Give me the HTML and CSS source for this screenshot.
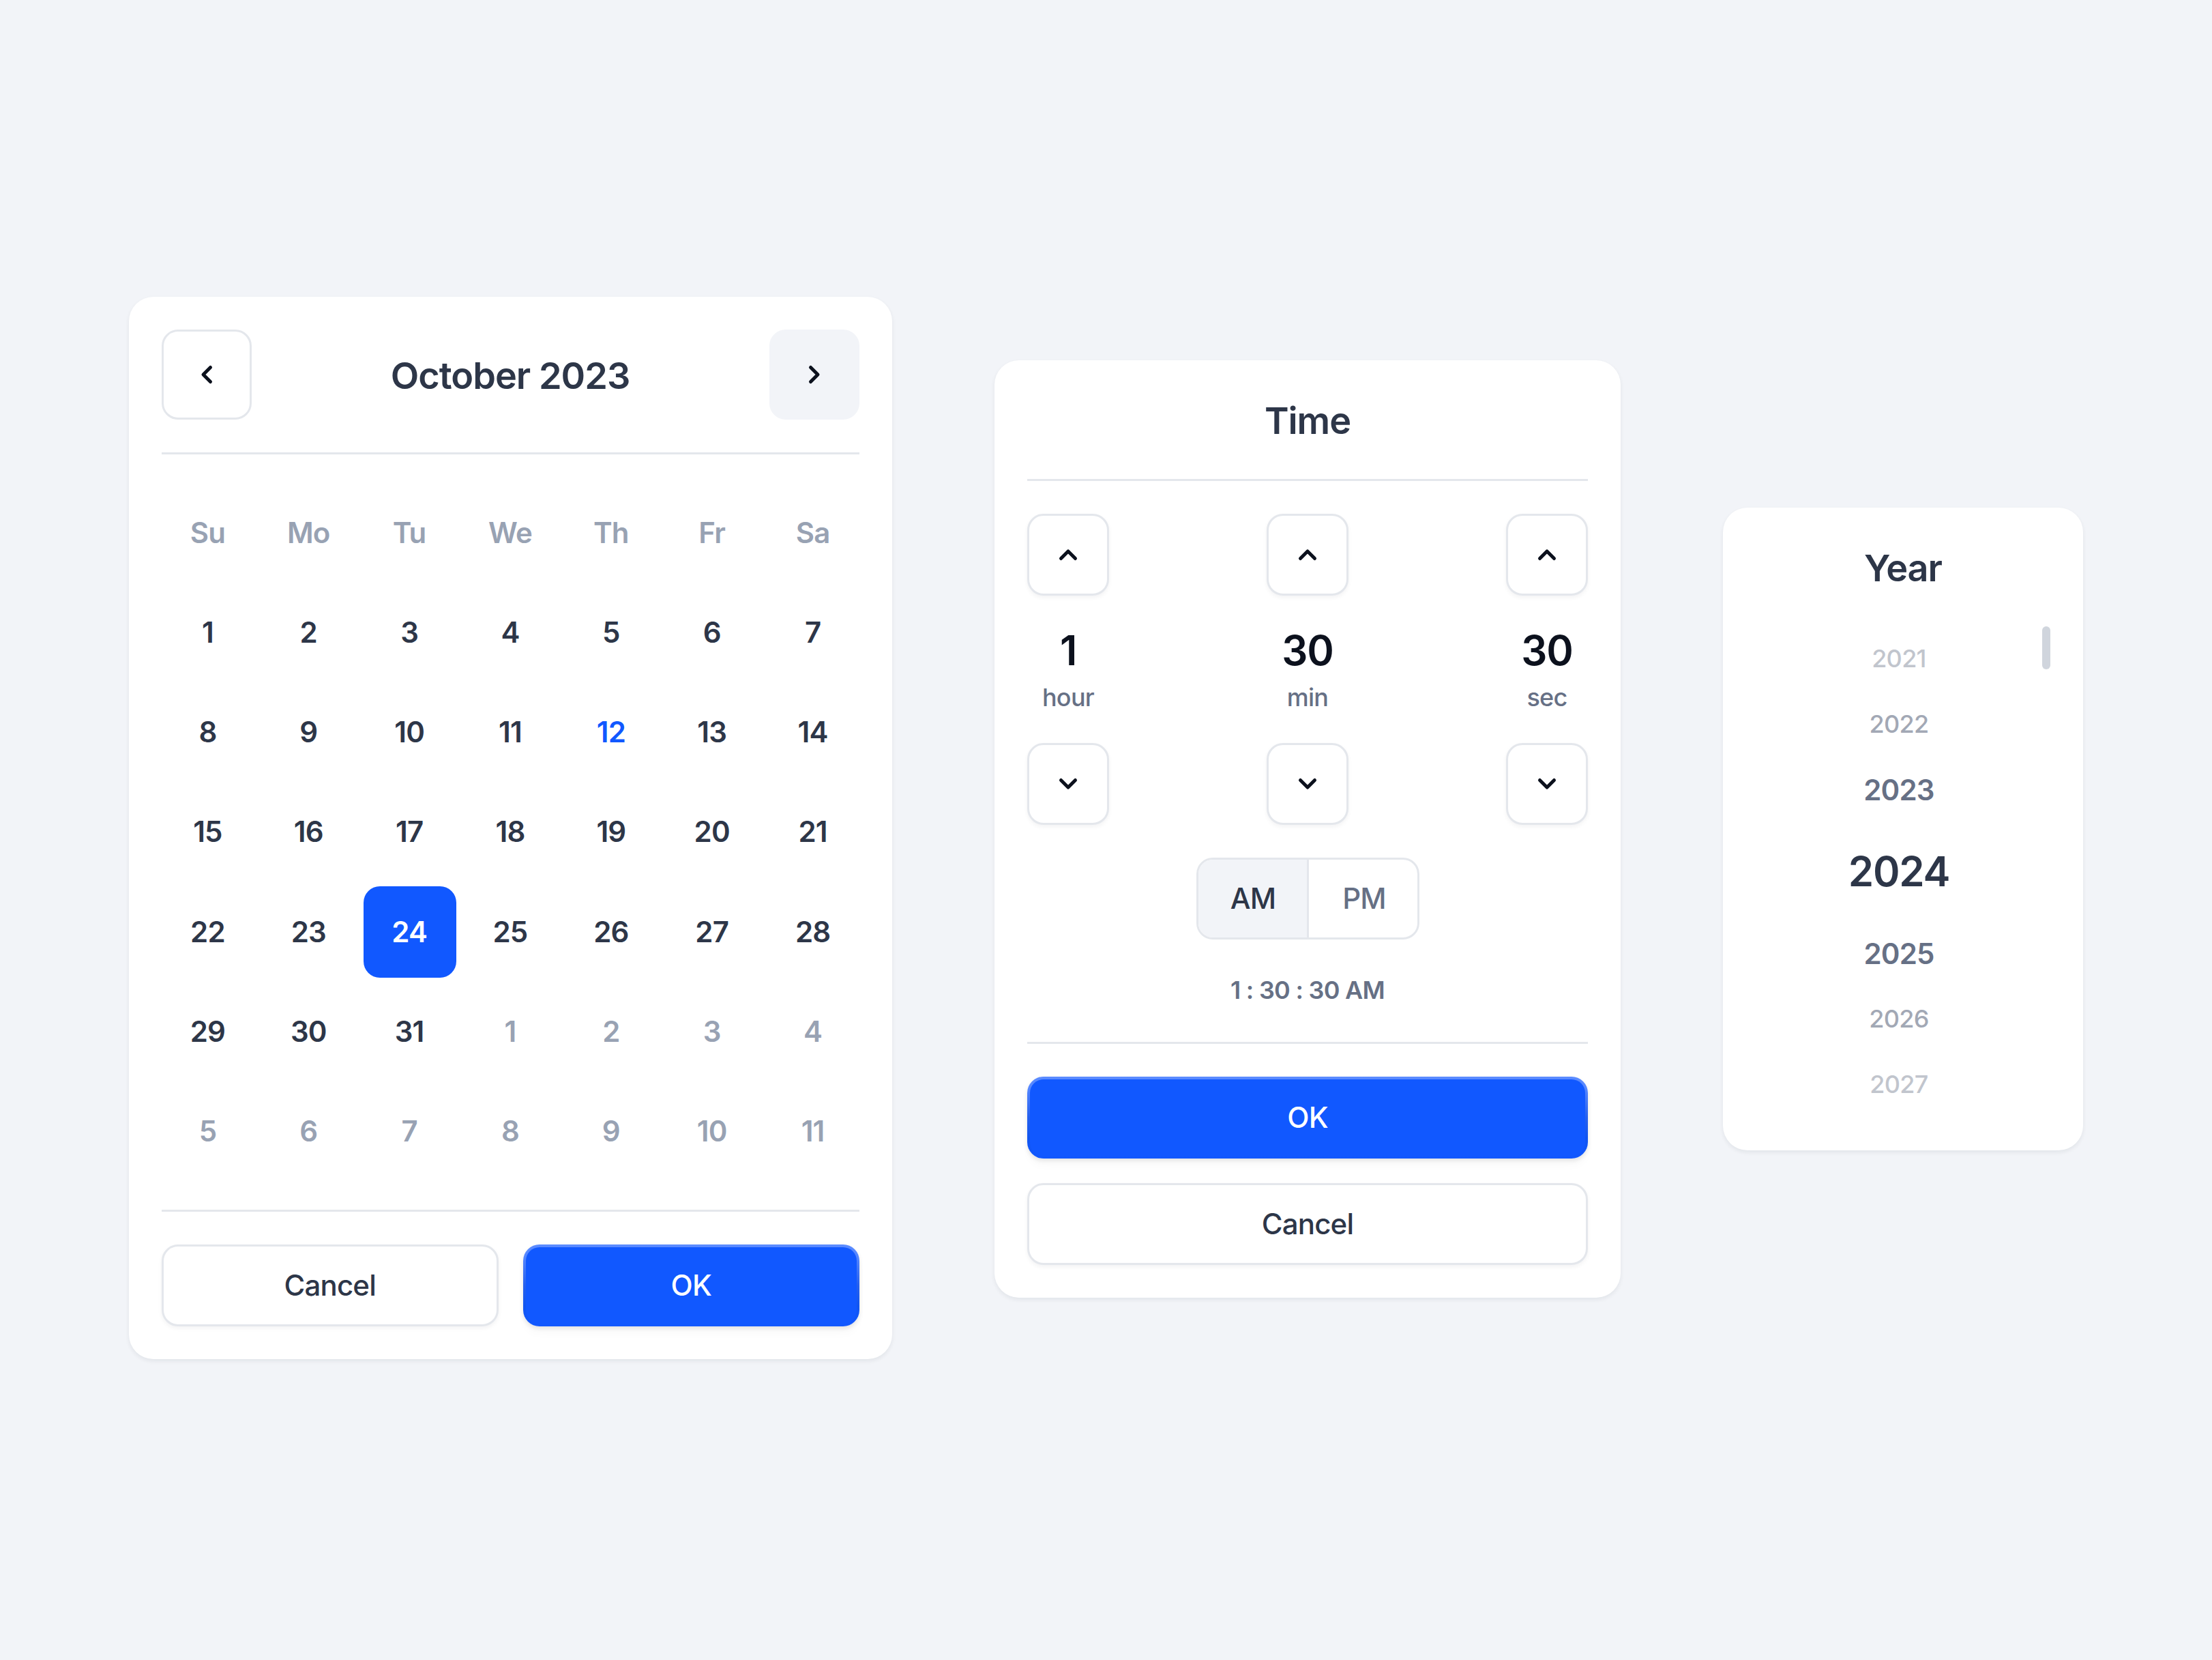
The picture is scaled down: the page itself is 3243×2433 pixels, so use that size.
FILE: index.html
```html
<!DOCTYPE html>
<html lang="en">
<head>
    <meta charset="UTF-8">
    <meta name="viewport" content="width=device-width, initial-scale=1.0">
    <title>Date and Time Picker</title>
    <link rel="stylesheet" href="styles.css">
</head>
<body>
    <main class="pickers">
        <!-- Calendar -->
        <section class="card calendar">
            <div class="calendar-header">
                <button class="nav-btn" aria-label="Previous month">
                    <svg class="icon" viewBox="0 0 48 48"><path d="M29.5 13.5 19 24l10.5 10.5"/></svg>
                </button>
                <h2 class="title month">October 2023</h2>
                <button class="nav-btn nav-btn-active" aria-label="Next month">
                    <svg class="icon" viewBox="0 0 48 48"><path d="M18.5 13.5 29 24 18.5 34.5"/></svg>
                </button>
            </div>
            <hr class="divider">
            <div class="days">
                <span class="weekday">Su</span>
                <span class="weekday">Mo</span>
                <span class="weekday">Tu</span>
                <span class="weekday">We</span>
                <span class="weekday">Th</span>
                <span class="weekday">Fr</span>
                <span class="weekday">Sa</span>
                <span>1</span>
                <span>2</span>
                <span>3</span>
                <span>4</span>
                <span>5</span>
                <span>6</span>
                <span>7</span>
                <span>8</span>
                <span>9</span>
                <span>10</span>
                <span>11</span>
                <span class="today">12</span>
                <span>13</span>
                <span>14</span>
                <span>15</span>
                <span>16</span>
                <span>17</span>
                <span>18</span>
                <span>19</span>
                <span>20</span>
                <span>21</span>
                <span>22</span>
                <span>23</span>
                <span class="selected">24</span>
                <span>25</span>
                <span>26</span>
                <span>27</span>
                <span>28</span>
                <span>29</span>
                <span>30</span>
                <span>31</span>
                <span class="other">1</span>
                <span class="other">2</span>
                <span class="other">3</span>
                <span class="other">4</span>
                <span class="other">5</span>
                <span class="other">6</span>
                <span class="other">7</span>
                <span class="other">8</span>
                <span class="other">9</span>
                <span class="other">10</span>
                <span class="other">11</span>
            </div>
            <hr class="divider">
            <div class="calendar-actions">
                <button class="btn btn-outline">Cancel</button>
                <button class="btn btn-primary">OK</button>
            </div>
        </section>

        <!-- Time -->
        <section class="card time">
            <h2 class="title time-title">Time</h2>
            <hr class="divider">
            <div class="units">
                <div class="unit">
                    <button class="step-btn" aria-label="Hour up">
                        <svg class="icon" viewBox="0 0 48 48"><path d="M13.5 29.5 24 19l10.5 10.5"/></svg>
                    </button>
                    <div class="unit-value">
                        <span class="number">1</span>
                        <span class="label">hour</span>
                    </div>
                    <button class="step-btn" aria-label="Hour down">
                        <svg class="icon" viewBox="0 0 48 48"><path d="M13.5 18.5 24 29l10.5-10.5"/></svg>
                    </button>
                </div>
                <div class="unit">
                    <button class="step-btn" aria-label="Minute up">
                        <svg class="icon" viewBox="0 0 48 48"><path d="M13.5 29.5 24 19l10.5 10.5"/></svg>
                    </button>
                    <div class="unit-value">
                        <span class="number">30</span>
                        <span class="label">min</span>
                    </div>
                    <button class="step-btn" aria-label="Minute down">
                        <svg class="icon" viewBox="0 0 48 48"><path d="M13.5 18.5 24 29l10.5-10.5"/></svg>
                    </button>
                </div>
                <div class="unit">
                    <button class="step-btn" aria-label="Second up">
                        <svg class="icon" viewBox="0 0 48 48"><path d="M13.5 29.5 24 19l10.5 10.5"/></svg>
                    </button>
                    <div class="unit-value">
                        <span class="number">30</span>
                        <span class="label">sec</span>
                    </div>
                    <button class="step-btn" aria-label="Second down">
                        <svg class="icon" viewBox="0 0 48 48"><path d="M13.5 18.5 24 29l10.5-10.5"/></svg>
                    </button>
                </div>
            </div>
            <div class="period">
                <button class="period-btn period-active">AM</button>
                <button class="period-btn">PM</button>
            </div>
            <p class="summary">1 : 30 : 30 AM</p>
            <hr class="divider">
            <div class="time-actions">
                <button class="btn btn-primary">OK</button>
                <button class="btn btn-outline">Cancel</button>
            </div>
        </section>

        <!-- Year -->
        <section class="card year">
            <h2 class="title">Year</h2>
            <div class="year-body">
                <ul class="years">
                    <li class="far">2021</li>
                    <li class="mid">2022</li>
                    <li class="near">2023</li>
                    <li class="current">2024</li>
                    <li class="near">2025</li>
                    <li class="mid">2026</li>
                    <li class="far">2027</li>
                </ul>
                <div class="scrollbar"></div>
            </div>
        </section>
    </main>
</body>
</html>
```
FILE: styles.css
```css
* {
    box-sizing: border-box;
    letter-spacing: -0.02em;
}
body {
    margin: 0;
    background-color: #f2f4f8;
    font-family: Inter, "Liberation Sans", sans-serif;
    color: #2d3648;
}
button {
    font-family: inherit;
    color: inherit;
    margin: 0;
    padding: 0;
    background: none;
    border: none;
    cursor: pointer;
}
.pickers {
    display: flex;
    align-items: center;
    justify-content: center;
    gap: 150px;
    height: 2433px;
    padding-bottom: 3px;
}
.card {
    display: flex;
    flex-direction: column;
    background: #fff;
    border-radius: 36px;
    padding: 48px;
    box-shadow: 0 3px 6px rgba(16, 24, 40, 0.07);
}
.title {
    margin: 0;
    font-size: 54px;
    font-weight: 600;
    line-height: 81px;
    text-align: center;
}
.divider {
    width: 100%;
    height: 3px;
    margin: 0;
    border: none;
    background: #e4e7ec;
}
.icon {
    display: block;
    width: 48px;
    height: 48px;
    fill: none;
    stroke: #0c111d;
    stroke-width: 5;
    stroke-linecap: round;
    stroke-linejoin: round;
}

/* buttons */
.btn {
    height: 120px;
    padding-bottom: 2px;
    border-radius: 24px;
    font-size: 42px;
    font-weight: 500;
}
.btn-outline {
    background: #fff;
    border: 3px solid #e4e7ec;
    box-shadow: 0 3px 6px rgba(16, 24, 40, 0.05);
}
.btn-primary {
    color: #fff;
    border: 4.5px solid transparent;
    background:
        linear-gradient(#1158ff, #1158ff) padding-box,
        linear-gradient(#5b8bff 0%, #5486ff 15%, #2560ee 50%, #1155f0 75%, #1158ff 100%) border-box;
    box-shadow: 0 3px 6px rgba(0, 0, 0, 0.1), 0 12px 12px rgba(0, 0, 0, 0.02);
}

/* calendar */
.calendar {
    width: 1119px;
    gap: 48px;
    margin-bottom: 3px;
}
.calendar-header {
    display: flex;
    align-items: center;
    justify-content: space-between;
}
.month {
    padding: 3px 1px 0 0;
    letter-spacing: -0.018em;
}
.nav-btn,
.step-btn {
    display: flex;
    align-items: center;
    justify-content: center;
    border: 3px solid #e4e7ec;
    border-radius: 24px;
}
.nav-btn {
    width: 132px;
    height: 132px;
}
.nav-btn-active {
    background: #f2f4f8;
    border-color: #f2f4f8;
}
.days {
    display: grid;
    grid-template-columns: repeat(7, 1fr);
    grid-template-rows: repeat(7, 1fr);
    gap: 12px;
    height: 1011px;
    font-size: 42px;
    font-weight: 600;
}
.days span {
    display: flex;
    align-items: center;
    justify-content: center;
    padding: 0 1px 1px 0;
    border-radius: 24px;
}
.days .weekday,
.days .other {
    color: #98a2b3;
}
.days .today {
    color: #1158ff;
}
.days .selected {
    background: #1158ff;
    color: #fff;
}
.calendar-actions {
    display: grid;
    grid-template-columns: 1fr 1fr;
    gap: 36px;
}

/* time */
.time {
    width: 918px;
    gap: 48px;
}
.time-title {
    margin-bottom: -3px;
}
.units {
    display: flex;
    justify-content: space-between;
}
.unit {
    display: flex;
    flex-direction: column;
    align-items: center;
    gap: 48px;
    width: 120px;
}
.step-btn {
    width: 120px;
    height: 120px;
    background: #fff;
    box-shadow: 0 3px 6px rgba(16, 24, 40, 0.05);
}
.unit-value {
    display: flex;
    flex-direction: column;
    align-items: center;
    gap: 18px;
    height: 120px;
}
.number {
    font-size: 60px;
    font-weight: 600;
    line-height: 64px;
    color: #0c111d;
}
.label {
    font-size: 36px;
    font-weight: 500;
    line-height: 39px;
    color: #667085;
}
.period {
    display: flex;
    align-self: center;
    width: 327px;
    height: 120px;
    border: 3px solid #e4e7ec;
    border-radius: 24px;
    overflow: hidden;
}
.period-btn {
    flex: 1;
    padding: 0 0 2px 4px;
    font-size: 42px;
    font-weight: 500;
    color: #667085;
}
.period-active {
    flex: 0 0 162px;
    padding-left: 2px;
    background: #f2f4f8;
    color: #2d3648;
    border-right: 3px solid #e4e7ec;
}
.summary {
    margin: 0;
    padding-bottom: 2px;
    font-size: 36px;
    font-weight: 600;
    line-height: 52px;
    text-align: center;
    color: #667085;
}
.time-actions {
    display: flex;
    flex-direction: column;
    gap: 36px;
}

/* year */
.year {
    width: 528px;
    gap: 45px;
}
.year-body {
    display: flex;
    height: 720px;
}
.years {
    flex: 1;
    display: flex;
    flex-direction: column;
    justify-content: center;
    gap: 42px;
    margin: 0;
    padding: 0 0 2px;
    list-style: none;
    text-align: center;
    line-height: 54px;
    color: #667085;
}
.far,
.mid {
    font-size: 36px;
    font-weight: 500;
}
.far {
    opacity: 0.4;
}
.mid {
    opacity: 0.6;
}
.near {
    font-size: 42px;
    font-weight: 600;
    line-height: 56px;
    margin-bottom: -2px;
}
.current {
    font-size: 60px;
    font-weight: 600;
    line-height: 102px;
    color: #2d3648;
}
.scrollbar {
    width: 12px;
    height: 63px;
    border-radius: 6px;
    background: #d0d5dd;
}
```
